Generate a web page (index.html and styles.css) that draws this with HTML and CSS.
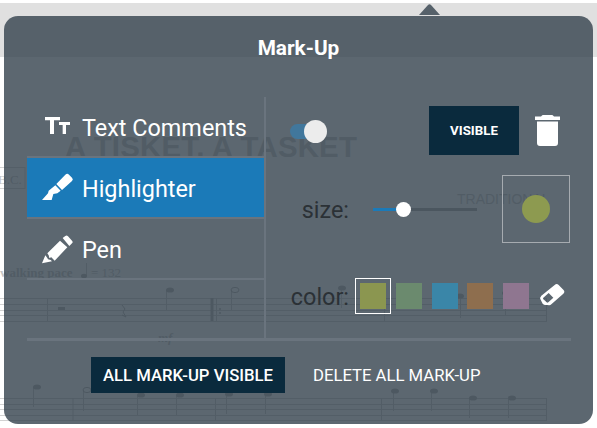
FILE: index.html
```html
<!DOCTYPE html>
<html lang="en">
<head>
<meta charset="utf-8">
<title>Mark-Up</title>
<link rel="stylesheet" href="styles.css">
</head>
<body>
<div class="page-band"></div>
<svg class="score" width="597" height="428" viewBox="0 0 597 428" aria-hidden="true">
  <text class="score-title" x="65" y="157">A TISKET, A TASKET</text>
  <text class="score-trad" x="457" y="204">TRADITIONAL</text>
  <rect class="score-box" x="-6" y="167.500" width="31" height="21"/>
  <text class="score-bc" x="-2" y="184">B.C.</text>
  <text class="score-tempo" x="0" y="277">walking pace</text>
  <text class="score-bpm" x="91" y="277">= 132</text>
  <text class="score-mf" x="158" y="342">mf</text>
  <path class="staff" d="M0 298.500H547M0 304.500H547M0 310.500H547M0 315.500H547M0 321.500H547M0 398.500H547M0 404.500H547M0 409.500H547M0 415.500H547M0 420.500H547"/>
  <path class="bar" d="M47.500 298V321M216.500 298V321M384.500 298V321M546.500 298V321M73 398V421M215.500 398V421M381.500 398V421M546.500 398V421M166.500 290V310M231.500 290V310M341.500 288V308M400.500 288V308M460.500 296V318M505.500 293V315M33.500 387V407M83.500 390V411M137.500 395V415M176.500 395V415M226.500 394V414M265.500 394V414M393.500 391V411M431.500 391V411M469.500 398V418M508.500 398V418M86.500 263V276"/>
  <path class="bar-thick" d="M212 298V321"/>
  <g class="heads">
    <ellipse cx="170" cy="290" rx="4" ry="2.600"/><ellipse cx="342" cy="288" rx="4" ry="2.600"/><ellipse cx="460" cy="296" rx="4" ry="2.600"/><ellipse cx="506" cy="293" rx="4" ry="2.600"/>
    <ellipse cx="37" cy="387" rx="4" ry="2.600"/><ellipse cx="141" cy="395" rx="4" ry="2.600"/><ellipse cx="180" cy="395" rx="4" ry="2.600"/><ellipse cx="229" cy="394" rx="4" ry="2.600"/><ellipse cx="268" cy="394" rx="4" ry="2.600"/><ellipse cx="395" cy="391" rx="4" ry="2.600"/><ellipse cx="434" cy="391" rx="4" ry="2.600"/><ellipse cx="473" cy="398" rx="4" ry="2.600"/><ellipse cx="512" cy="398" rx="4" ry="2.600"/>
    <ellipse cx="84" cy="276" rx="3" ry="2.200"/>
    <rect x="58" y="307" width="7" height="3"/>
    <circle cx="220" cy="309" r="1"/><circle cx="220" cy="313" r="1"/>
    <path d="M122 305l3 4-2 3 3 5-4-2" class="rest"/>
  </g>
  <g class="hollow"><ellipse cx="235" cy="290" rx="4" ry="2.600"/><ellipse cx="400" cy="288" rx="4" ry="2.600"/><ellipse cx="87" cy="390" rx="4" ry="2.600"/></g>
</svg>

<svg class="caret" width="21" height="11" viewBox="0 0 21 11" aria-hidden="true"><path d="M0 11 9 1q1.500-1.500 3 0l9 10z"/></svg>

<section class="panel">
  <h1 class="panel-title">Mark-Up</h1>
  <div class="panel-body">
    <div class="main">
      <ul class="tools">
        <li class="tool">
          <svg class="tool-icon" viewBox="-6 -9 114 105"><path d="M15 15H60V25H42V66H30V25H15ZM57 30H90V39H78V66H68V39H57Z"/></svg>
          <span class="tool-name">Text Comments</span>
        </li>
        <li class="tool tool-active">
          <svg class="tool-icon" viewBox="0 0 114 105"><path d="M82 14Q88 9 93 14L102 23Q107 28 102 33L72 60 55 42ZM52 46 68 62 58 70 46 72 41 90H12L30 70 32 62Z"/></svg>
          <span class="tool-name">Highlighter</span>
        </li>
        <li class="tool">
          <svg class="tool-icon" viewBox="0 -3 114 105"><path d="M74 18 82 12Q86 9 90 13L102 26Q106 30 102 34L94 42ZM66 26 88 46 50 86 40 76 34 78 32 70 28 64ZM22 70 28 78 30 82 38 84 42 88 12 94Z"/></svg>
          <span class="tool-name">Pen</span>
        </li>
      </ul>
      <div class="options">
        <div class="row-toggle">
          <div class="toggle"><span class="toggle-track"></span><span class="toggle-knob"></span></div>
          <button class="btn btn-visible">VISIBLE</button>
          <svg class="trash" width="25" height="31" viewBox="0 0 25 31"><path d="M7 .5Q7 0 8 0H17Q18 0 18 .5L19 1.500H25V5H0V1.500H6ZM2 6.500H23V28Q23 31 20 31H5Q2 31 2 28Z"/></svg>
        </div>
        <div class="row-size">
          <label class="opt-label">size:</label>
          <div class="slider"><span class="slider-fill"></span><span class="slider-thumb"></span></div>
          <div class="preview"><span class="preview-dot"></span></div>
        </div>
        <div class="row-color">
          <label class="opt-label">color:</label>
          <div class="swatches">
            <span class="swatch swatch-on"><i class="chip chip-olive"></i></span>
            <span class="swatch"><i class="chip chip-green"></i></span>
            <span class="swatch"><i class="chip chip-blue"></i></span>
            <span class="swatch"><i class="chip chip-orange"></i></span>
            <span class="swatch"><i class="chip chip-pink"></i></span>
          </div>
          <svg class="eraser" width="32" height="30" viewBox="0 0 96 90"><path fill-rule="evenodd" d="M56 12Q62 6 68 12L82 26Q88 32 82 38L46 70Q42 74 36 72L28 72Q24 72 20 68L14 56Q10 50 16 44ZM38 36 22 50Q20 53 22 55L32 64Q34 66 37 64L52 50Z"/></svg>
        </div>
      </div>
    </div>
    <div class="actions">
      <button class="btn btn-all">ALL MARK-UP VISIBLE</button>
      <button class="btn btn-delete">DELETE ALL MARK-UP</button>
    </div>
  </div>
</section>
</body>
</html>
```
FILE: styles.css
```css
* { box-sizing: border-box; }
html, body { margin: 0; padding: 0; }
body {
  width: 597px;
  height: 428px;
  overflow: hidden;
  background: #fff;
  font-family: Roboto, "Liberation Sans", sans-serif;
  position: relative;
  padding-top: 3px;
}
.page-band { height: 54px; background: #e0e0e0; }

/* score beneath the translucent panel */
.score { position: absolute; left: 0; top: 0; }
.score-title { font: 700 29.400px "Liberation Sans", sans-serif; fill: #c6c6c6; letter-spacing: .2px; }
.score-trad { font: 400 14px "Liberation Sans", sans-serif; fill: #c9c9c9; }
.score-bc { font: 400 13px "Liberation Serif", serif; fill: #c6c6c6; }
.score-box { fill: none; stroke: #d4d4d4; }
.score-tempo { font: 700 13px "Liberation Serif", serif; fill: #c6c6c6; }
.score-bpm { font: 400 13px "Liberation Serif", serif; fill: #c6c6c6; }
.score-mf { font: italic 700 13px "Liberation Serif", serif; fill: #c6c6c6; }
.staff { stroke: #d2d2d2; fill: none; }
.bar { stroke: #cacaca; fill: none; }
.bar-thick { stroke: #b4b4b4; stroke-width: 3; fill: none; }
.heads { fill: #b4b4b4; }
.rest { fill: none; stroke: #b4b4b4; }
.hollow { fill: none; stroke: #b4b4b4; }

.caret { position: absolute; left: 419px; top: 4px; fill: #56616a; }

.panel {
  position: absolute;
  left: 4px;
  top: 16px;
  width: 589px;
  height: 408px;
  border-radius: 14px;
  background: rgba(51, 65, 76, .8);
  color: #fff;
}
.panel-title {
  margin: 0;
  height: 81px;
  padding-top: 20px;
  font-size: 20.800px;
  line-height: 24px;
  font-weight: 700;
  text-align: center;
}
.panel-body { padding: 0 22px 0 23px; }

.main { display: flex; height: 244px; border-bottom: 3px solid #6a747e; }

.tools { list-style: none; margin: 0 1px 0 0; padding: 0; width: 239px; border-right: 2px solid #6a747e; flex: none; }
.tool {
  display: flex;
  align-items: center;
  height: 61px;
  border-bottom: 2px solid #6a747e;
  font-size: 23.400px;
  line-height: 28px;
  color: #fff;
}
.tool-active { background: #1b7ab8; }
.tool-icon { fill: #fff; flex: none; width: 38px; height: 35px; margin-left: 11px; margin-right: 6px; }
.tool-name { margin-top: 2px; }

.options { flex: 1; display: flex; flex-direction: column; }
.row-toggle { display: flex; align-items: center; height: 49px; margin-top: 9px; padding-left: 23px; }
.toggle { position: relative; width: 37px; height: 24px; flex: none; }
.toggle-track { position: absolute; left: 0; top: 5px; width: 30px; height: 15px; border-radius: 8px; background: #41779c; filter: blur(.5px); }
.toggle-knob { position: absolute; left: 14px; top: 1px; width: 23px; height: 23px; border-radius: 50%; background: #ececec; }
.btn {
  border: 0;
  border-radius: 0;
  font-family: inherit;
  color: #fff;
  background: none;
  padding: 0;
}
.btn-visible {
  width: 90px;
  height: 49px;
  margin-left: 102px;
  background: #0a2a3d;
  font-size: 13.300px;
  font-weight: 700;
  flex: none;
}
.trash { fill: #fff; margin-left: 16px; flex: none; }

.opt-label { width: 82px; text-align: right; flex: none; font-size: 23.400px; line-height: 28px; color: #2b3136; margin-top: 2px; }
.row-size { display: flex; align-items: center; height: 68px; margin-top: 20px; }
.slider { position: relative; width: 104px; height: 3px; margin-left: 24px; background: #4b565f; }
.slider-fill { position: absolute; left: 0; top: 0; height: 3px; width: 31px; background: #1b7ab8; }
.slider-thumb { position: absolute; left: 23px; top: -6px; width: 15px; height: 15px; border-radius: 50%; background: #fff; }
.preview { width: 68px; height: 68px; margin-left: 25px; border: 1px solid #a6abb0; display: flex; align-items: center; justify-content: center; }
.preview-dot { width: 28px; height: 28px; border-radius: 50%; background: #8d9a50; }

.row-color { display: flex; align-items: center; height: 36px; margin-top: 35px; }
.swatches { display: flex; margin-left: 6px; }
.swatch { width: 35.750px; height: 36px; border: 1px solid transparent; padding: 4px; display: block; flex: none; }
.swatch-on { border-color: #fff; }
.chip { display: block; width: 26px; height: 26px; }
.chip-olive { background: #8b9650; }
.chip-green { background: #6b8a6e; }
.chip-blue { background: #3a86a8; }
.chip-orange { background: #8e6e4e; }
.chip-pink { background: #8f7690; }
.eraser { fill: #fff; margin-left: 2px; flex: none; }

.actions { display: flex; align-items: center; padding: 16px 0 0 64px; }
.btn-all { height: 36px; padding: 0 12px; background: #0a2a3d; font-size: 16.700px; font-weight: 500; white-space: nowrap; }
.btn-delete { height: 36px; padding: 0 12px; margin-left: 16px; font-size: 16.700px; font-weight: 400; white-space: nowrap; }
```
